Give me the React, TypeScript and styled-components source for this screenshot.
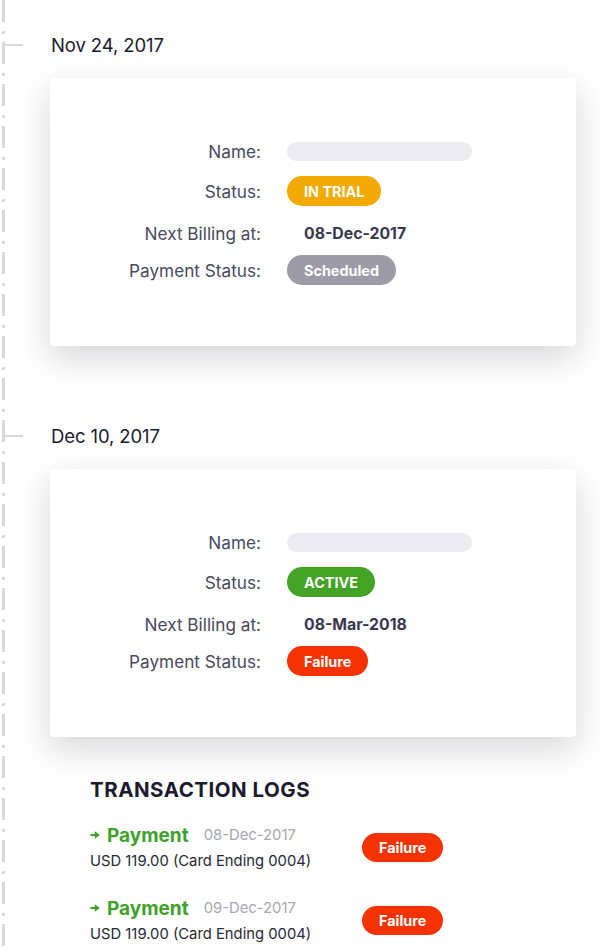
import styled, { createGlobalStyle } from 'styled-components';

const GlobalStyle = createGlobalStyle`
  html, body {
    margin: 0;
    padding: 0;
    background: #ffffff;
    font-family: Inter, "Noto Sans", sans-serif;
    -webkit-font-smoothing: antialiased;
  }
`;

const Page = styled.div`
  min-height: 948px;
  box-sizing: border-box;
  padding: 0 32px 0 50px;
  background-image: linear-gradient(
    to bottom,
    #d9d9dc 0,
    #d9d9dc 22px,
    transparent 22px,
    transparent 31px,
    #d9d9dc 31px,
    #d9d9dc 34px,
    transparent 34px
  );
  background-size: 3px 42px;
  background-repeat: repeat-y;
  background-position: 2px 0;
`;

const Section = styled.section`
  padding-top: 33px;
  & + & {
    padding-top: 78px;
  }
`;

const DateHeading = styled.h2`
  display: flex;
  align-items: center;
  gap: 28px;
  margin: 0 0 21px -45px;
  height: 24px;
  font-size: 18.5px;
  font-weight: 400;
  color: #1b1a2e;
  letter-spacing: -0.1px;
`;

const Tick = styled.span`
  width: 18px;
  height: 2px;
  background: #d9d9dc;
`;

const Card = styled.div`
  background: #ffffff;
  border-radius: 4px;
  box-shadow: 0 12px 34px rgba(30, 30, 50, 0.18);
  padding: 54px 0 60px;
  display: grid;
  grid-template-columns: 211px 1fr;
  grid-template-rows: 38px 42px 42px 32px;
  column-gap: 26px;
  align-items: center;
`;

const Label = styled.div`
  text-align: right;
  font-size: 17.2px;
  color: #4b4a5e;
`;

const NamePlaceholder = styled.div`
  width: 185px;
  height: 19px;
  border-radius: 10px;
  background: #ecebf1;
`;

const Badge = styled.span<{ $color: string; $compact?: boolean }>`
  display: inline-flex;
  align-items: center;
  justify-self: start;
  height: ${p => (p.$compact ? 29 : 30)}px;
  padding: 0 17px;
  border-radius: 15px;
  background: ${p => p.$color};
  color: #ffffff;
  font-size: 14.4px;
  font-weight: 700;
  white-space: nowrap;
`;

const BillingDate = styled.div`
  padding-left: 17px;
  font-size: 15.8px;
  font-weight: 700;
  color: #3a3850;
`;

const Logs = styled.div`
  padding: 41px 0 0 40px;
`;

const LogsTitle = styled.h3`
  margin: 0 0 20px;
  height: 24px;
  line-height: 24px;
  font-size: 20.5px;
  font-weight: 700;
  letter-spacing: 0.5px;
  color: #1c1a2e;
`;

const LogRow = styled.div`
  display: grid;
  grid-template-columns: 272px auto;
  align-items: center;
  & + & {
    margin-top: 23px;
  }
`;

const LogHead = styled.div`
  display: flex;
  align-items: center;
  height: 26px;
`;

const Payment = styled.span`
  display: inline-flex;
  align-items: center;
  gap: 7px;
  color: #3da12a;
  font-size: 19px;
  font-weight: 700;
`;

const LogDate = styled.span`
  margin-left: 15px;
  font-size: 14.8px;
  color: #a9a7b1;
`;

const LogDetail = styled.div`
  margin-top: 2px;
  height: 22px;
  line-height: 22px;
  font-size: 14.8px;
  color: #2a2838;
`;

const Arrow = () => (
  <svg width="10" height="10" viewBox="0 0 10 10">
    <path d="M0.5 5H6.5" stroke="#3da12a" strokeWidth="2" />
    <path d="M4.8 1.2L9.8 5L4.8 8.8Z" fill="#3da12a" />
  </svg>
);

type Sub = {
  date: string;
  status: string;
  statusColor: string;
  nextBilling: string;
  payment: string;
  paymentColor: string;
};

const subs: Sub[] = [
  {
    date: 'Nov 24, 2017',
    status: 'IN TRIAL',
    statusColor: '#f2a900',
    nextBilling: '08-Dec-2017',
    payment: 'Scheduled',
    paymentColor: '#9d9ba5',
  },
  {
    date: 'Dec 10, 2017',
    status: 'ACTIVE',
    statusColor: '#43a325',
    nextBilling: '08-Mar-2018',
    payment: 'Failure',
    paymentColor: '#f53300',
  },
];

const logs = ['08-Dec-2017', '09-Dec-2017'];

const App = () => {
  return (
    <>
      <GlobalStyle />
      <Page>
        {subs.map(s => (
          <Section key={s.date}>
            <DateHeading>
              <Tick />
              {s.date}
            </DateHeading>
            <Card>
              <Label>Name:</Label>
              <NamePlaceholder />
              <Label>Status:</Label>
              <Badge $color={s.statusColor}>{s.status}</Badge>
              <Label>Next Billing at:</Label>
              <BillingDate>{s.nextBilling}</BillingDate>
              <Label>Payment Status:</Label>
              <Badge $color={s.paymentColor}>{s.payment}</Badge>
            </Card>
          </Section>
        ))}
        <Logs>
          <LogsTitle>TRANSACTION LOGS</LogsTitle>
          {logs.map(d => (
            <LogRow key={d}>
              <div>
                <LogHead>
                  <Payment>
                    <Arrow />
                    Payment
                  </Payment>
                  <LogDate>{d}</LogDate>
                </LogHead>
                <LogDetail>USD 119.00 (Card Ending 0004)</LogDetail>
              </div>
              <Badge $color="#f53300" $compact>
                Failure
              </Badge>
            </LogRow>
          ))}
        </Logs>
      </Page>
    </>
  );
};

export default App;
